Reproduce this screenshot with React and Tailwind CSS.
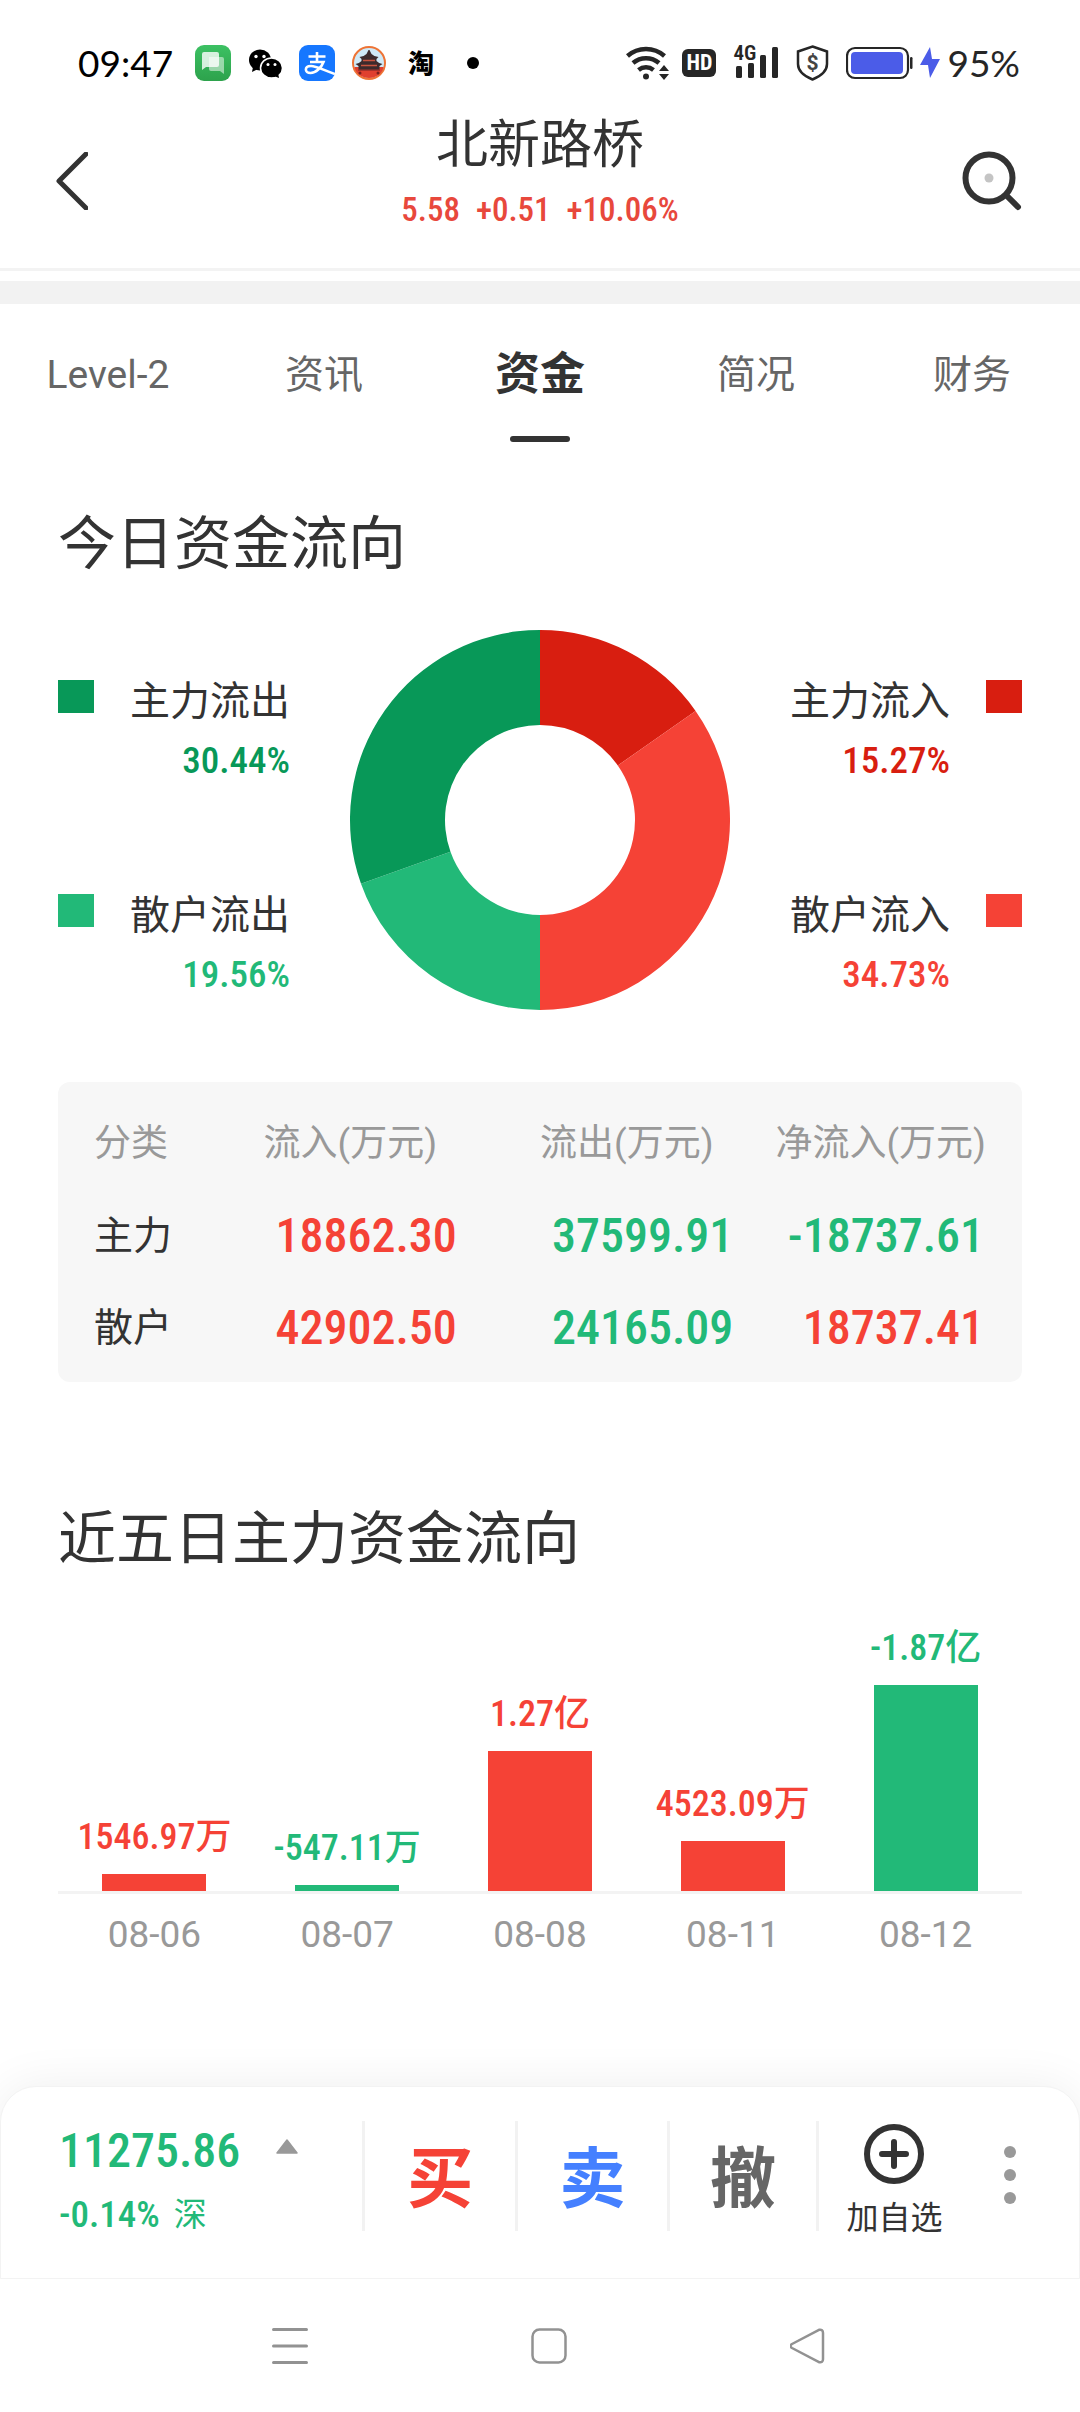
const DIN = "font-['Roboto_Condensed','Noto_Sans_CJK_SC',sans-serif]";

const RED = "#f54236";
const GREEN = "#22b978";

const tabs = ["Level-2", "资讯", "资金", "简况", "财务"];

const slices = [
  { label: "主力流入", value: 15.27, color: "#d81e10" },
  { label: "散户流入", value: 34.73, color: RED },
  { label: "散户流出", value: 19.56, color: GREEN },
  { label: "主力流出", value: 30.44, color: "#089858" },
];

const rows = [
  { name: "主力", inflow: "18862.30", outflow: "37599.91", net: "-18737.61" },
  { name: "散户", inflow: "42902.50", outflow: "24165.09", net: "18737.41" },
];

const days = [
  { date: "08-06", value: 1546.97, label: "1546.97万" },
  { date: "08-07", value: -547.11, label: "-547.11万" },
  { date: "08-08", value: 12700, label: "1.27亿" },
  { date: "08-11", value: 4523.09, label: "4523.09万" },
  { date: "08-12", value: -18737.61, label: "-1.87亿" },
];

function StatusBar() {
  return (
    <div className="flex items-center justify-between pl-[78px] pr-[60px] pt-[45px] font-['Lato','Noto_Sans_CJK_SC',sans-serif] text-[37px] leading-9 text-black">
      <div className="flex items-center gap-4">
        <span className="mr-1.5">09:47</span>
        <svg className="size-9" viewBox="0 0 36 36">
          <defs>
            <linearGradient id="msg" x1="0" y1="0" x2="0" y2="1">
              <stop offset="0" stopColor="#3cc163" />
              <stop offset="1" stopColor="#2da24c" />
            </linearGradient>
          </defs>
          <rect width="36" height="36" rx="9" fill="url(#msg)" />
          <path d="M14 12h13q2 0 2 2v15l-4-3H16q-2 0-2-2z" fill="#fff" opacity=".5" />
          <path d="M9 7h13q2 0 2 2v11q0 2-2 2H11l-4 3V9q0-2 2-2z" fill="#fff" opacity=".8" />
        </svg>
        <svg className="size-9" viewBox="0 0 36 36">
          <ellipse cx="13" cy="15" rx="11" ry="10.500" />
          <path d="M6 22l-1 5 6-3z" />
          <circle cx="9" cy="11.500" r="1.700" fill="#fff" />
          <circle cx="17" cy="11.500" r="1.700" fill="#fff" />
          <ellipse cx="24.500" cy="23" rx="11" ry="10" stroke="#fff" strokeWidth="1.500" />
          <path d="M27 31l5 2-1-5z" />
          <circle cx="21" cy="19.500" r="1.500" fill="#fff" />
          <circle cx="28" cy="19.500" r="1.500" fill="#fff" />
        </svg>
        <svg className="size-9" viewBox="0 0 36 36">
          <rect width="36" height="36" rx="9" fill="#1677ff" />
          <path
            d="M9.500 11.500h17M18 7v10M11 17h13.500c-2 5.500-7.500 11-13 11-6 0-6.500-7 .5-7 5.500 0 12 4 24 8"
            fill="none"
            stroke="#fff"
            strokeWidth="2.600"
          />
        </svg>
        <svg className="size-9" viewBox="0 0 36 36">
          <circle cx="18" cy="18" r="16" fill="#cfe9f7" stroke="#ee7436" strokeWidth="2" />
          <path d="M3.500 22h29c-1 7-8 11-14.500 11S4.500 29 3.500 22z" fill="#e0402f" />
          <path d="M17.500 5h1l2 4q3 3 7 3l-2 2v2q3 3 6 3l-3 2v4H7.500v-4l-3-2q3 0 6-3v-2l-2-2q4 0 7-3z" fill="#3d2a2c" />
          <path d="M12 15.500h12M10 20.500h16" stroke="#c9543f" strokeWidth="1.500" />
          <path d="M7 24.500h22v1.500H7z" fill="#a8322a" />
          <circle cx="9" cy="28" r="1.500" fill="#7a1f1c" />
          <circle cx="27" cy="28" r="1.500" fill="#7a1f1c" />
        </svg>
        <span className="w-9 text-center text-[26px] font-black">淘</span>
        <span className="ml-3 size-3 rounded-full bg-black" />
      </div>

      <div className="flex items-center gap-[17px] text-[#262626]">
        <div className="flex items-center gap-3">
          <svg className="h-9 w-11" viewBox="0 0 44 36" fill="none" stroke="#262626" strokeWidth="4.500">
            <path d="M1.500 11a28 28 0 0 1 37 0M7 18a20 20 0 0 1 26 0M12.500 25a12 12 0 0 1 15 0" />
            <circle cx="20" cy="31.500" r="3" fill="#262626" stroke="none" />
            <path d="M33 26l5-6 5 6zM33 29l5 6 5-6z" fill="#262626" stroke="none" />
          </svg>
          <span className="rounded-md bg-[#262626] px-1 font-['Roboto_Condensed',sans-serif] text-[22px] leading-7 font-bold text-white">
            HD
          </span>
        </div>
        <div className="flex">
          <span className="-mr-6 w-6 self-start font-['Roboto_Condensed',sans-serif] text-[21px] leading-4 font-semibold">
            4G
          </span>
          <svg className="h-9 w-[46px]" viewBox="0 0 46 36" fill="#262626">
            <rect x="3" y="21" width="6" height="12" rx="1.500" />
            <rect x="15" y="18" width="6" height="15" rx="1.500" />
            <rect x="27" y="10" width="6" height="23" rx="1.500" />
            <rect x="39" y="2" width="6" height="31" rx="1.500" />
          </svg>
        </div>
        <svg className="h-9 w-[33px]" viewBox="0 0 33 36">
          <path
            d="M16.500 1.500l14.500 5v12.500c0 8-7 12.500-14.500 15.500C9 31.500 2 27 2 19V6.500z"
            fill="none"
            stroke="#262626"
            strokeWidth="2.500"
          />
          <text
            x="16.500"
            y="25"
            fontSize="21"
            fontWeight="700"
            textAnchor="middle"
            fill="#444"
            className="font-['Roboto',sans-serif]"
          >
            $
          </text>
        </svg>
        <div className="flex items-center gap-[7px]">
          <svg className="h-9 w-[67px]" viewBox="0 0 67 36">
            <rect x="1" y="3" width="61" height="30" rx="8" fill="none" stroke="#262626" strokeWidth="2.200" />
            <rect x="5" y="7" width="52" height="22" rx="4" fill="#4b5ce8" />
            <rect x="64" y="12" width="2.500" height="12" rx="1.200" fill="#262626" />
          </svg>
          <svg className="h-9 w-5" viewBox="0 0 20 36">
            <path d="M10 2L0 20h8l2 13L20 14h-8z" fill="#4b5ce8" />
          </svg>
          <span>95%</span>
        </div>
      </div>
    </div>
  );
}

function Header() {
  return (
    <header className="flex items-center justify-between border-b-3 border-[#f3f3f3] px-[56px] pt-[33px] pb-5">
      <button aria-label="返回" className="w-16">
        <svg className="h-[58px] w-8" viewBox="0 0 32 58" fill="none" stroke="#333" strokeWidth="5">
          <path d="M30 2L3 29l27 27" strokeLinecap="round" strokeLinejoin="round" />
        </svg>
      </button>
      <div className="pb-[18px] text-center">
        <h1 className="text-[52px] leading-[64px] text-[#333]">北新路桥</h1>
        <p
          className={`${DIN} mt-3 flex justify-center gap-4 text-[33px] leading-10 font-medium text-[#e8483c]`}
        >
          <span>5.58</span>
          <span>+0.51</span>
          <span>+10.06%</span>
        </p>
      </div>
      <button aria-label="搜索" className="flex w-16 justify-end">
        <svg className="size-[62px]" viewBox="0 0 62 62" fill="none" stroke="#333">
          <circle cx="27" cy="28" r="23.500" strokeWidth="6" />
          <path d="M45 46l11 11" strokeWidth="6" strokeLinecap="round" />
          <circle cx="27" cy="28" r="4.500" fill="#c4c4c4" stroke="none" />
        </svg>
      </button>
    </header>
  );
}

function Tabs({ active }) {
  return (
    <nav className="grid grid-cols-5 pt-[39px]">
      {tabs.map((t) => (
        <button key={t} className="flex flex-col items-center gap-[29px]">
          <span
            className={
              t === active
                ? "text-[45px] leading-[64px] font-bold text-[#333]"
                : "text-[39px] leading-[64px] text-[#666]"
            }
          >
            {t}
          </span>
          {t === active && <span className="h-1.5 w-[60px] rounded-[3px] bg-[#333]" />}
        </button>
      ))}
    </nav>
  );
}

function Donut() {
  let start = 0;
  const point = (pct, r) => {
    const a = (pct / 100) * 2 * Math.PI;
    return `${190 + r * Math.sin(a)} ${190 - r * Math.cos(a)}`;
  };
  return (
    <svg className="size-[380px]" viewBox="0 0 380 380" role="img" aria-label="今日资金流向">
      {slices.map((s) => {
        const from = start;
        const to = start + s.value;
        start = to;
        return (
          <path
            key={s.label}
            fill={s.color}
            d={`M${point(from, 190)}A190 190 0 0 1 ${point(to, 190)}L${point(to, 95)}A95 95 0 0 0 ${point(from, 95)}Z`}
          />
        );
      })}
    </svg>
  );
}

function LegendItem({ item, reverse }) {
  return (
    <div className={`flex gap-9 ${reverse ? "flex-row-reverse" : ""}`}>
      <span className="mt-2 h-[33px] w-9" style={{ backgroundColor: item.color }} />
      <div className="text-right">
        <p className="text-[40px] leading-[60px] text-[#333]">{item.label}</p>
        <p className={`${DIN} text-[37px] leading-[58px] font-medium`} style={{ color: item.color }}>
          {item.value}%
        </p>
      </div>
    </div>
  );
}

function FlowTable() {
  return (
    <div className="mt-[72px] rounded-xl bg-[#f7f7f7] px-9 pt-4 pb-2">
      <table className="w-full table-fixed text-left whitespace-nowrap">
        <thead>
          <tr className="h-[92px] text-[37px] text-[#999]">
            <th className="w-[19%] font-normal">分类</th>
            <th className="w-[31%] font-normal">流入(万元)</th>
            <th className="w-[26%] font-normal">流出(万元)</th>
            <th className="w-[24%] text-right font-normal">净流入(万元)</th>
          </tr>
        </thead>
        <tbody className={`${DIN} text-[48px] font-medium`}>
          {rows.map((r) => (
            <tr key={r.name} className="h-[92px]">
              <th className="text-[39px] font-normal text-[#333]">{r.name}</th>
              <td className="pl-3 text-[#f54236]">{r.inflow}</td>
              <td className="pl-3 text-[#22b978]">{r.outflow}</td>
              <td className={`pr-0.5 text-right ${r.net.startsWith("-") ? "text-[#22b978]" : "text-[#f54236]"}`}>
                {r.net}
              </td>
            </tr>
          ))}
        </tbody>
      </table>
    </div>
  );
}

function FiveDayChart() {
  const max = Math.max(...days.map((d) => Math.abs(d.value)));
  return (
    <div>
      <div className="grid h-[315px] grid-cols-5 items-end border-b-3 border-[#f3f3f3]">
        {days.map((d) => {
          const color = d.value < 0 ? GREEN : RED;
          return (
            <div key={d.date} className="flex flex-col items-center">
              <span className={`${DIN} mb-3.5 text-[36px] leading-[46px] font-medium`} style={{ color }}>
                {d.label}
              </span>
              <span
                className="w-[104px]"
                style={{ height: Math.round((Math.abs(d.value) / max) * 206), backgroundColor: color }}
              />
            </div>
          );
        })}
      </div>
      <div className="mt-[18px] grid grid-cols-5 text-center text-[37px] leading-[46px] text-[#999]">
        {days.map((d) => (
          <span key={d.date}>{d.date}</span>
        ))}
      </div>
    </div>
  );
}

function TradeBar() {
  return (
    <div className="grid grid-cols-[362fr_153fr_152fr_150fr_263fr] items-start rounded-t-[36px] border border-[#f3f3f3] bg-white pt-[34px] pb-[37px] shadow-[0_0_48px_rgba(0,0,0,0.07)]">
      <div className="pl-[58px] text-[#22b978]">
        <p className={`${DIN} flex items-start gap-9 text-[48px] leading-[60px] font-medium`}>
          11275.86
          <svg className="mt-[18px] h-[15px] w-[22px]" viewBox="0 0 22 15">
            <path d="M11 1L21 14H1z" fill="#999" stroke="#999" strokeWidth="1.500" strokeLinejoin="round" />
          </svg>
        </p>
        <p className="mt-2 flex gap-3.5 text-[33px] leading-[52px]">
          <span className={`${DIN} text-[37px] font-medium`}>-0.14%</span>
          <span>深</span>
        </p>
      </div>
      <button className="h-[110px] border-l-3 border-[#f2f2f2] pt-2 text-[66px] leading-none font-bold text-[#f54236]">
        买
      </button>
      <button className="h-[110px] border-l-3 border-[#f2f2f2] pt-2 text-[66px] leading-none font-bold text-[#4580ff]">
        卖
      </button>
      <button className="h-[110px] border-l-3 border-[#f2f2f2] pt-2 text-[66px] leading-none font-bold text-[#666]">
        撤
      </button>
      <div className="flex h-[110px] items-start justify-between border-l-3 border-[#f2f2f2] pr-[63px] pl-[27px]">
        <button className="flex flex-col items-center pt-[3px] text-[32px] leading-10 text-[#333]">
          <svg className="mb-3.5 size-[60px]" viewBox="0 0 60 60" fill="none" stroke="#333" strokeWidth="6">
            <circle cx="30" cy="30" r="27" />
            <path d="M30 18v24M18 30h24" strokeLinecap="round" />
          </svg>
          加自选
        </button>
        <button aria-label="更多" className="pt-[25px]">
          <svg className="h-[58px] w-3" viewBox="0 0 12 58" fill="#999">
            <circle cx="6" cy="6" r="6" />
            <circle cx="6" cy="29" r="6" />
            <circle cx="6" cy="52" r="6" />
          </svg>
        </button>
      </div>
    </div>
  );
}

function SystemNav() {
  return (
    <nav className="grid grid-cols-3 justify-items-center bg-white pt-[49px] pr-[142px] pb-12 pl-[160px]">
      <button aria-label="最近任务">
        <svg className="size-9" viewBox="0 0 36 36" stroke="#929292" strokeWidth="3" strokeLinecap="round">
          <path d="M1.500 1.500h33M1.500 18h33M1.500 34.500h33" />
        </svg>
      </button>
      <button aria-label="主屏幕">
        <svg className="size-9" viewBox="0 0 36 36" fill="none" stroke="#929292" strokeWidth="2.500">
          <rect x="1.500" y="1.500" width="33" height="33" rx="7" />
        </svg>
      </button>
      <button aria-label="返回上一页">
        <svg className="size-9" viewBox="0 0 36 36" fill="none" stroke="#929292" strokeWidth="2.500">
          <path d="M29 1.800L2 16q-3 2 0 4l27 14.200q4 .8 4-3V5q0-4-4-3.200z" strokeLinejoin="round" />
        </svg>
      </button>
    </nav>
  );
}

export default function App() {
  const [mainIn, retailIn, retailOut, mainOut] = slices;
  return (
    <div className="flex min-h-screen flex-col overflow-hidden bg-white font-['Roboto','Noto_Sans_CJK_SC',sans-serif]">
      <StatusBar />
      <Header />
      <div className="mt-2.5 h-[23px] bg-[#f2f2f2]" />
      <Tabs active="资金" />

      <main className="flex-1 px-[58px] pb-20">
        <h2 className="mt-[62px] text-[58px] leading-[80px] text-[#333]">今日资金流向</h2>
        <section className="mt-[46px] flex items-start justify-between">
          <div className="flex flex-col gap-24 pt-[42px]">
            <LegendItem item={mainOut} />
            <LegendItem item={retailOut} />
          </div>
          <Donut />
          <div className="flex flex-col gap-24 pt-[42px]">
            <LegendItem item={mainIn} reverse />
            <LegendItem item={retailIn} reverse />
          </div>
        </section>
        <FlowTable />

        <h2 className="mt-[117px] text-[58px] leading-[80px] text-[#333]">近五日主力资金流向</h2>
        <FiveDayChart />
      </main>

      <TradeBar />
      <SystemNav />
    </div>
  );
}
